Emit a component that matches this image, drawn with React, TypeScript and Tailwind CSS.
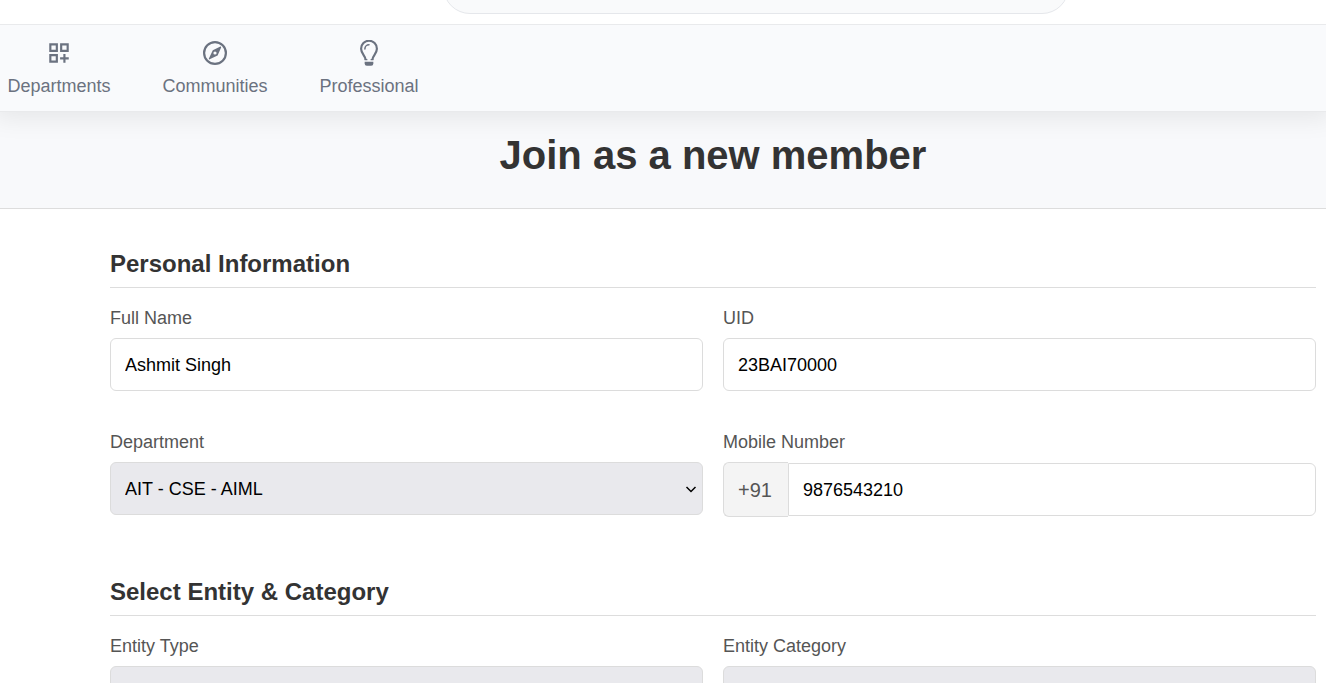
import type { ReactNode } from "react";

const navItems: { label: string; width: string; iconSize: string; icon: ReactNode }[] = [
  {
    label: "Departments",
    width: "w-[118px]",
    iconSize: "size-[26px]",
    icon: (
      <path d="M3 3h8v8H3V3zm2 2v4h4V5H5zm8-2h8v8h-8V3zm2 2v4h4V5h-4zM3 13h8v8H3v-8zm2 2v4h4v-4H5zm11-2h2v3h3v2h-3v3h-2v-3h-3v-2h3v-3z" />
    ),
  },
  {
    label: "Communities",
    width: "w-[114px]",
    iconSize: "size-6",
    icon: (
      <path d="M12 0a12 12 0 1 0 0 24 12 12 0 0 0 0-24zm0 2.200a9.800 9.800 0 1 1 0 19.600 9.800 9.800 0 0 1 0-19.600zM17.400 5.600 9.800 9.200 5.900 17.600a.5.5 0 0 0 .7.7l8-3.800 3.500-8.100c.2-.6-.2-1-.7-.8zM12 10.400a1.600 1.600 0 1 1 0 3.200 1.600 1.600 0 0 1 0-3.200z" />
    ),
  },
  {
    label: "Professional",
    width: "w-[114px]",
    iconSize: "size-[26px]",
    icon: (
      <>
        <path
          d="M8.900 18.200C8.900 14.600 4.700 12.800 4.700 8a7.300 7.300 0 0 1 14.600 0c0 4.800-4.200 6.600-4.200 10.200"
          fill="none"
          stroke="currentColor"
          strokeWidth="2"
        />
        <path d="M7.900 17.600h2.600v1.200H7.900zM13.500 17.600h2.600v1.200h-2.600z" />
        <path
          d="M8.200 8.200A3.800 3.800 0 0 1 12 4.400"
          fill="none"
          stroke="currentColor"
          strokeWidth="1.400"
          strokeLinecap="round"
        />
        <path d="M8 20h8v1.800a2 2 0 0 1-2 2h-4a2 2 0 0 1-2-2z" />
      </>
    ),
  },
];

const controlClass =
  "h-[53px] w-full rounded-md border border-[#dcdcdc] px-3.5 text-lg text-black outline-none";

function Field({ id, label, children }: { id: string; label: string; children: ReactNode }) {
  return (
    <div className="min-w-0">
      <label htmlFor={id} className="mb-2.5 block text-lg leading-5 text-[#555555]">
        {label}
      </label>
      {children}
    </div>
  );
}

function Select({ id, options }: { id: string; options: string[] }) {
  return (
    <div className="relative">
      <select id={id} className={`${controlClass} block appearance-none bg-[#e9e9ed]`}>
        {options.map((option) => (
          <option key={option}>{option}</option>
        ))}
      </select>
      <svg
        className="pointer-events-none absolute top-1/2 right-1.5 size-3 -translate-y-1/2"
        viewBox="0 0 12 12"
        fill="none"
        stroke="black"
        strokeWidth="1.5"
        aria-hidden="true"
      >
        <path d="M1.500 4 6 8.500 10.500 4" />
      </svg>
    </div>
  );
}

function Section({ title, children }: { title: string; children: ReactNode }) {
  return (
    <section className="mb-15">
      <h2 className="mb-5 border-b border-[#dddddd] pb-2 text-2xl leading-[30px] font-bold text-[#333333]">
        {title}
      </h2>
      <div className="grid grid-cols-2 gap-x-5 gap-y-[41px]">{children}</div>
    </section>
  );
}

export default function App() {
  return (
    <div className="flex h-screen flex-col overflow-hidden bg-white font-['Liberation_Sans',Arial,sans-serif]">
      <header className="relative z-10 flex h-6 shrink-0 items-end justify-center overflow-hidden bg-white pb-2.5 pl-[186px]">
        <input
          type="search"
          aria-label="Search"
          className="h-[54px] w-[626px] shrink-0 rounded-full border border-[#e5e7eb] bg-[#f9fafb] px-6"
        />
      </header>

      <nav className="relative flex h-[88px] shrink-0 gap-10 border-y border-[#e9eaec] bg-[#f9fafc] pt-[15px] shadow-[0_0_24px_6px_rgba(0,0,0,0.08)]">
        {navItems.map((item) => (
          <a
            key={item.label}
            href="#"
            className={`${item.width} flex flex-col items-center gap-2 text-[#6b7280]`}
          >
            <span className="flex h-[26px] items-center">
              <svg viewBox="0 0 24 24" className={item.iconSize} fill="currentColor" aria-hidden="true">
                {item.icon}
              </svg>
            </span>
            <span className="text-lg leading-6">{item.label}</span>
          </a>
        ))}
      </nav>

      <div className="h-[97px] shrink-0 border-b border-[#dddddd] bg-[#f8f9fb] pt-5 pl-[100px]">
        <h1 className="text-center text-[40px] leading-[46px] font-bold text-[#333333]">
          Join as a new member
        </h1>
      </div>

      <form className="pt-10 pr-2.5 pl-[110px]">
        <Section title="Personal Information">
          <Field id="full-name" label="Full Name">
            <input id="full-name" className={`${controlClass} pt-0.5`} defaultValue="Ashmit Singh" />
          </Field>
          <Field id="uid" label="UID">
            <input id="uid" className={`${controlClass} pt-0.5`} defaultValue="23BAI70000" />
          </Field>
          <Field id="department" label="Department">
            <Select id="department" options={["AIT - CSE - AIML"]} />
          </Field>
          <Field id="mobile" label="Mobile Number">
            <div className="flex items-center">
              <span className="flex h-[55px] items-center rounded-l-md border border-r-0 border-[#dcdcdc] bg-[#f4f4f4] pr-4 pl-3.5 text-xl text-[#555555]">
                +91
              </span>
              <input
                id="mobile"
                type="tel"
                className="h-[53px] min-w-0 flex-1 rounded-r-md border border-[#dcdcdc] px-3.5 pt-0.5 text-lg text-black outline-none"
                defaultValue="9876543210"
              />
            </div>
          </Field>
        </Section>

        <Section title="Select Entity & Category">
          <Field id="entity-type" label="Entity Type">
            <Select id="entity-type" options={["Club"]} />
          </Field>
          <Field id="entity-category" label="Entity Category">
            <Select id="entity-category" options={["Technical"]} />
          </Field>
        </Section>
      </form>
    </div>
  );
}
